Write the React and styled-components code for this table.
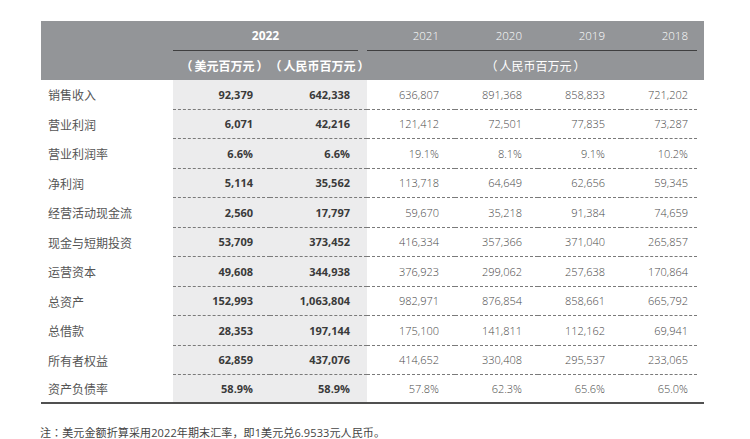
import React from "react";
import styled, { createGlobalStyle } from "styled-components";

const Global = createGlobalStyle`
  html, body { margin: 0; padding: 0; background: #fff; }
  body { font-family: "Open Sans", "Noto Sans CJK SC", sans-serif; }
`;

const COLS = "132px 97px 97px 88px 83px 83px 83px";
const CJK = `"Open Sans", "Noto Sans CJK SC", sans-serif`;

const Page = styled.div`
  padding: 21px 0 0 41px;
  width: 663px;
`;

const Table = styled.div`
  width: 663px;
`;

const HeaderBand = styled.div`
  background: #939598;
  color: #fff;
`;

const HeadRow = styled.div`
  display: grid;
  grid-template-columns: ${COLS};
  height: ${(p) => p.$h}px;
`;

const YearGroup = styled.div`
  grid-column: 2 / 4;
  margin-right: 9px;
  border-bottom: 1px solid #3f3f40;
  display: flex;
  align-items: center;
  justify-content: center;
  font-family: ${CJK};
  font-weight: 700;
  font-size: 12px;
`;

const YearsGroup = styled.div`
  grid-column: 4 / 8;
  margin-right: 7px;
  border-bottom: 1px solid #3f3f40;
  display: grid;
  grid-template-columns: 88px 83px 83px 76px;
`;

const YearCell = styled.div`
  display: flex;
  align-items: center;
  justify-content: flex-end;
  padding-right: ${(p) => (p.$last ? 9 : 16)}px;
  font-family: ${CJK};
  font-weight: 300;
  font-size: 11.5px;
`;

const UnitCell = styled.div`
  grid-column: ${(p) => p.$col};
  display: flex;
  align-items: center;
  justify-content: center;
  padding-left: ${(p) => p.$pl || 0}px;
  font-family: "Noto Sans CJK SC", sans-serif;
  font-size: 12px;
  font-weight: ${(p) => (p.$bold ? 700 : 400)};
  white-space: nowrap;
`;

const Paren = styled.span`
  display: inline-block;
  margin: 0 ${(p) => (p.$open ? "2px 0 0" : "0 0 2px")};
`;

const Row = styled.div`
  display: grid;
  grid-template-columns: ${COLS};
  height: ${(p) => (p.$last ? 27 : 29.5)}px;
  border-bottom: ${(p) => (p.$last ? "2px solid #505050" : "none")};
`;

const Label = styled.div`
  display: flex;
  align-items: center;
  padding-left: 7px;
  font-family: "Noto Sans CJK SC", sans-serif;
  font-size: 12px;
  color: #555;
`;

const Cell = styled.div`
  display: flex;
  align-items: center;
  justify-content: flex-end;
  padding-right: ${(p) => p.$pr}px;
  margin-right: ${(p) => p.$mr || 0}px;
  background: ${(p) => (p.$shade ? "#ececed" : "transparent")};
  border-bottom: ${(p) => (p.$last ? "none" : "1px dashed #7a7a7a")};
  font-family: "Open Sans", sans-serif;
  font-size: 11px;
  font-weight: ${(p) => (p.$shade ? 700 : 300)};
  color: ${(p) => (p.$shade ? "#3a3a3a" : "#4a4a4a")};
`;

const Note = styled.div`
  margin-top: 20px;
  margin-left: -1px;
  font-family: "Open Sans", "Noto Sans CJK JP", sans-serif;
  font-size: 11px;
  letter-spacing: 0.12px;
  color: #444;
  white-space: nowrap;
`;

const rows = [
  ["销售收入", "92,379", "642,338", "636,807", "891,368", "858,833", "721,202"],
  ["营业利润", "6,071", "42,216", "121,412", "72,501", "77,835", "73,287"],
  ["营业利润率", "6.6%", "6.6%", "19.1%", "8.1%", "9.1%", "10.2%"],
  ["净利润", "5,114", "35,562", "113,718", "64,649", "62,656", "59,345"],
  ["经营活动现金流", "2,560", "17,797", "59,670", "35,218", "91,384", "74,659"],
  ["现金与短期投资", "53,709", "373,452", "416,334", "357,366", "371,040", "265,857"],
  ["运营资本", "49,608", "344,938", "376,923", "299,062", "257,638", "170,864"],
  ["总资产", "152,993", "1,063,804", "982,971", "876,854", "858,661", "665,792"],
  ["总借款", "28,353", "197,144", "175,100", "141,811", "112,162", "69,941"],
  ["所有者权益", "62,859", "437,076", "414,652", "330,408", "295,537", "233,065"],
  ["资产负债率", "58.9%", "58.9%", "57.8%", "62.3%", "65.6%", "65.0%"],
];

function Unit({ children }) {
  return (
    <>
      <Paren $open>（</Paren>
      {children}
      <Paren>）</Paren>
    </>
  );
}

export default function App() {
  return (
    <>
      <Global />
      <Page>
        <Table>
          <HeaderBand>
            <HeadRow $h={30}>
              <YearGroup>2022</YearGroup>
              <YearsGroup>
                <YearCell>2021</YearCell>
                <YearCell>2020</YearCell>
                <YearCell>2019</YearCell>
                <YearCell $last>2018</YearCell>
              </YearsGroup>
            </HeadRow>
            <HeadRow $h={29}>
              <UnitCell $col="2" $bold $pl={6}><Unit>美元百万元</Unit></UnitCell>
              <UnitCell $col="3" $bold $pl={2}><Unit>人民币百万元</Unit></UnitCell>
              <UnitCell $col="4 / 8"><Unit>人民币百万元</Unit></UnitCell>
            </HeadRow>
          </HeaderBand>
          {rows.map((r, i) => {
            const last = i === rows.length - 1;
            return (
              <Row key={r[0]} $last={last}>
                <Label>{r[0]}</Label>
                <Cell $shade $pr={17} $last={last}>{r[1]}</Cell>
                <Cell $shade $pr={17} $last={last}>{r[2]}</Cell>
                <Cell $pr={16} $last={last}>{r[3]}</Cell>
                <Cell $pr={16} $last={last}>{r[4]}</Cell>
                <Cell $pr={16} $last={last}>{r[5]}</Cell>
                <Cell $pr={9} $mr={7} $last={last}>{r[6]}</Cell>
              </Row>
            );
          })}
        </Table>
        <Note>注：美元金额折算采用2022年期末汇率，即1美元兑6.9533元人民币。</Note>
      </Page>
    </>
  );
}
